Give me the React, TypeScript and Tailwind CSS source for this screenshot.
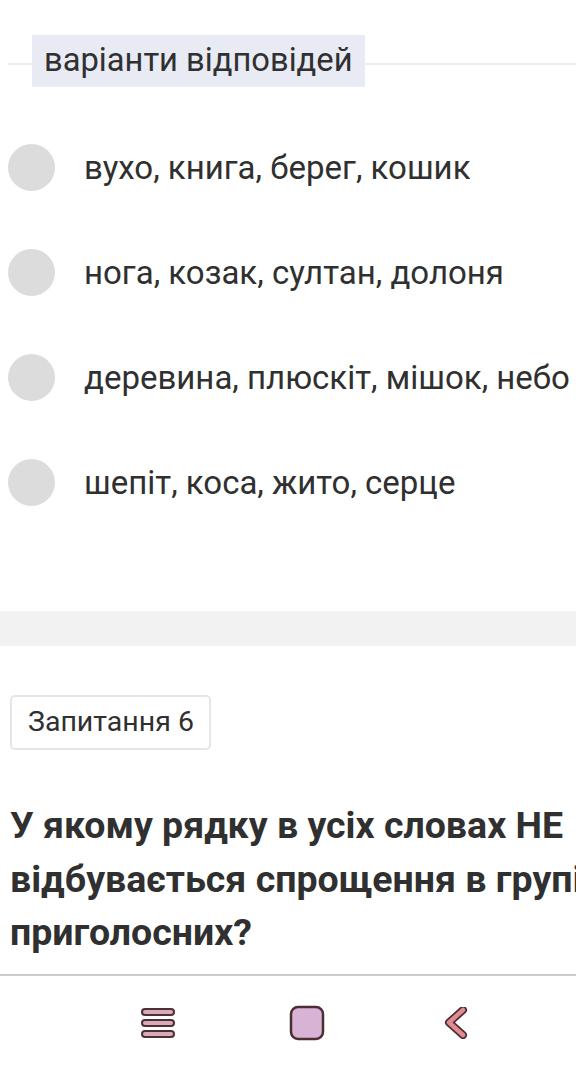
import React from 'react';

const options = [
  'вухо, книга, берег, кошик',
  'нога, козак, султан, долоня',
  'деревина, плюскіт, мішок, небо',
  'шепіт, коса, жито, серце',
];

const MenuIcon = () => (
  <svg width="36" height="32" viewBox="0 0 36 32">
    <rect x="2" y="2" width="32" height="6" rx="3" fill="#d9aab7" stroke="#4d3034" strokeWidth="2" />
    <rect x="2" y="13" width="32" height="6" rx="3" fill="#d9aab7" stroke="#4d3034" strokeWidth="2" />
    <rect x="2" y="24" width="32" height="6" rx="3" fill="#d9aab7" stroke="#4d3034" strokeWidth="2" />
  </svg>
);

const HomeIcon = () => (
  <svg width="36" height="36" viewBox="0 0 36 36">
    <rect x="2" y="2" width="32" height="32" rx="7" fill="#d8b3d6" stroke="#4a2e32" strokeWidth="2.5" />
  </svg>
);

const BackIcon = () => (
  <svg width="24" height="32" viewBox="0 0 24 32">
    <path d="M19 3 L5 15.5 L19 28" fill="none" stroke="#4d2c30" strokeWidth="8" strokeLinecap="round" strokeLinejoin="round" />
    <path d="M19 3 L5 15.5 L19 28" fill="none" stroke="#e08a91" strokeWidth="4.5" strokeLinecap="round" strokeLinejoin="round" />
  </svg>
);

export default function App() {
  return (
    <div className="w-[576px] h-[1070px] overflow-hidden bg-white text-[#303030] flex flex-col" style={{ fontFamily: 'Roboto, "Noto Sans", sans-serif' }}>
      <div className="flex items-start pt-[35px] pl-[8px]">
        <div className="mt-[28px] w-[24px] h-[2px] bg-[#ececec]" />
        <div className="h-[52px] px-[12px] flex items-center bg-[#e8eaf4] text-[32.7px] whitespace-nowrap">варіанти відповідей</div>
        <div className="mt-[28px] flex-1 h-[2px] bg-[#ececec]" />
      </div>

      <div className="mt-[28px] flex flex-col">
        {options.map((o) => (
          <div key={o} className="h-[105px] flex items-center">
            <div className="ml-[8px] w-[47px] h-[47px] rounded-full bg-[#dcdcdc] shrink-0" />
            <div className="ml-[29px] text-[33px] whitespace-nowrap">{o}</div>
          </div>
        ))}
      </div>

      <div className="mt-[76px] h-[35px] bg-[#f2f2f2] shrink-0" />

      <div className="mt-[49px] pl-[10px]">
        <div className="w-[201px] h-[55px] border-2 border-[#e6e6e6] rounded-[5px] flex items-center pl-[16px] text-[28.5px] whitespace-nowrap">
          Запитання 6
        </div>
      </div>

      <div className="mt-[49px] pl-[10px] font-bold text-[37.5px] leading-[53.5px] whitespace-nowrap">
        У якому рядку в усіх словах НЕ
        <br />
        відбувається спрощення в групі
        <br />
        приголосних?
      </div>

      <div className="mt-[14px] h-[2px] bg-[#cccccc] shrink-0" />

      <div className="flex-1 flex items-center pl-[128px] gap-[89px]">
        <div className="w-[60px] flex justify-center"><MenuIcon /></div>
        <div className="w-[60px] flex justify-center"><HomeIcon /></div>
        <div className="w-[60px] flex justify-center"><BackIcon /></div>
      </div>
    </div>
  );
}
